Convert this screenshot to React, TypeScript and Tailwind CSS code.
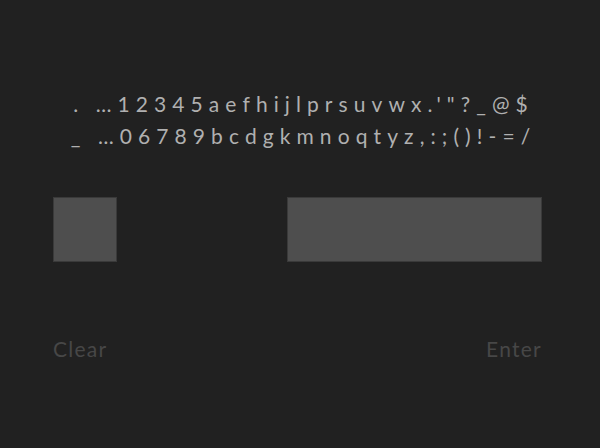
import React from "react";

export default function App() {
  return (
    <div className="w-[600px] h-[448px] bg-[#212121] flex flex-col pl-[53px] pr-[58px] pt-[88px]" style={{ fontFamily: "Lato, 'Noto Sans', sans-serif" }}>
      <div className="flex flex-col items-center pl-[12px] text-[#b0b0b0] text-[21px] leading-[32px] tracking-[0.29em]">
        <div>. …12345aefhijlprsuvwx.'"?_@$</div>
        <div>_ …06789bcdgkmnoqtyz,:;()!-=/</div>
      </div>
      <div className="flex justify-between mt-[45px]">
        <div className="w-[64px] h-[65px] bg-[#4e4e4e] border border-[#3a3a3a]" />
        <div className="w-[255px] h-[65px] bg-[#4e4e4e] border border-[#3a3a3a]" />
      </div>
      <div className="flex justify-between mt-[73px] text-[21px] text-[#474747] leading-[28px] tracking-[0.06em]">
        <span>Clear</span>
        <span>Enter</span>
      </div>
    </div>
  );
}
